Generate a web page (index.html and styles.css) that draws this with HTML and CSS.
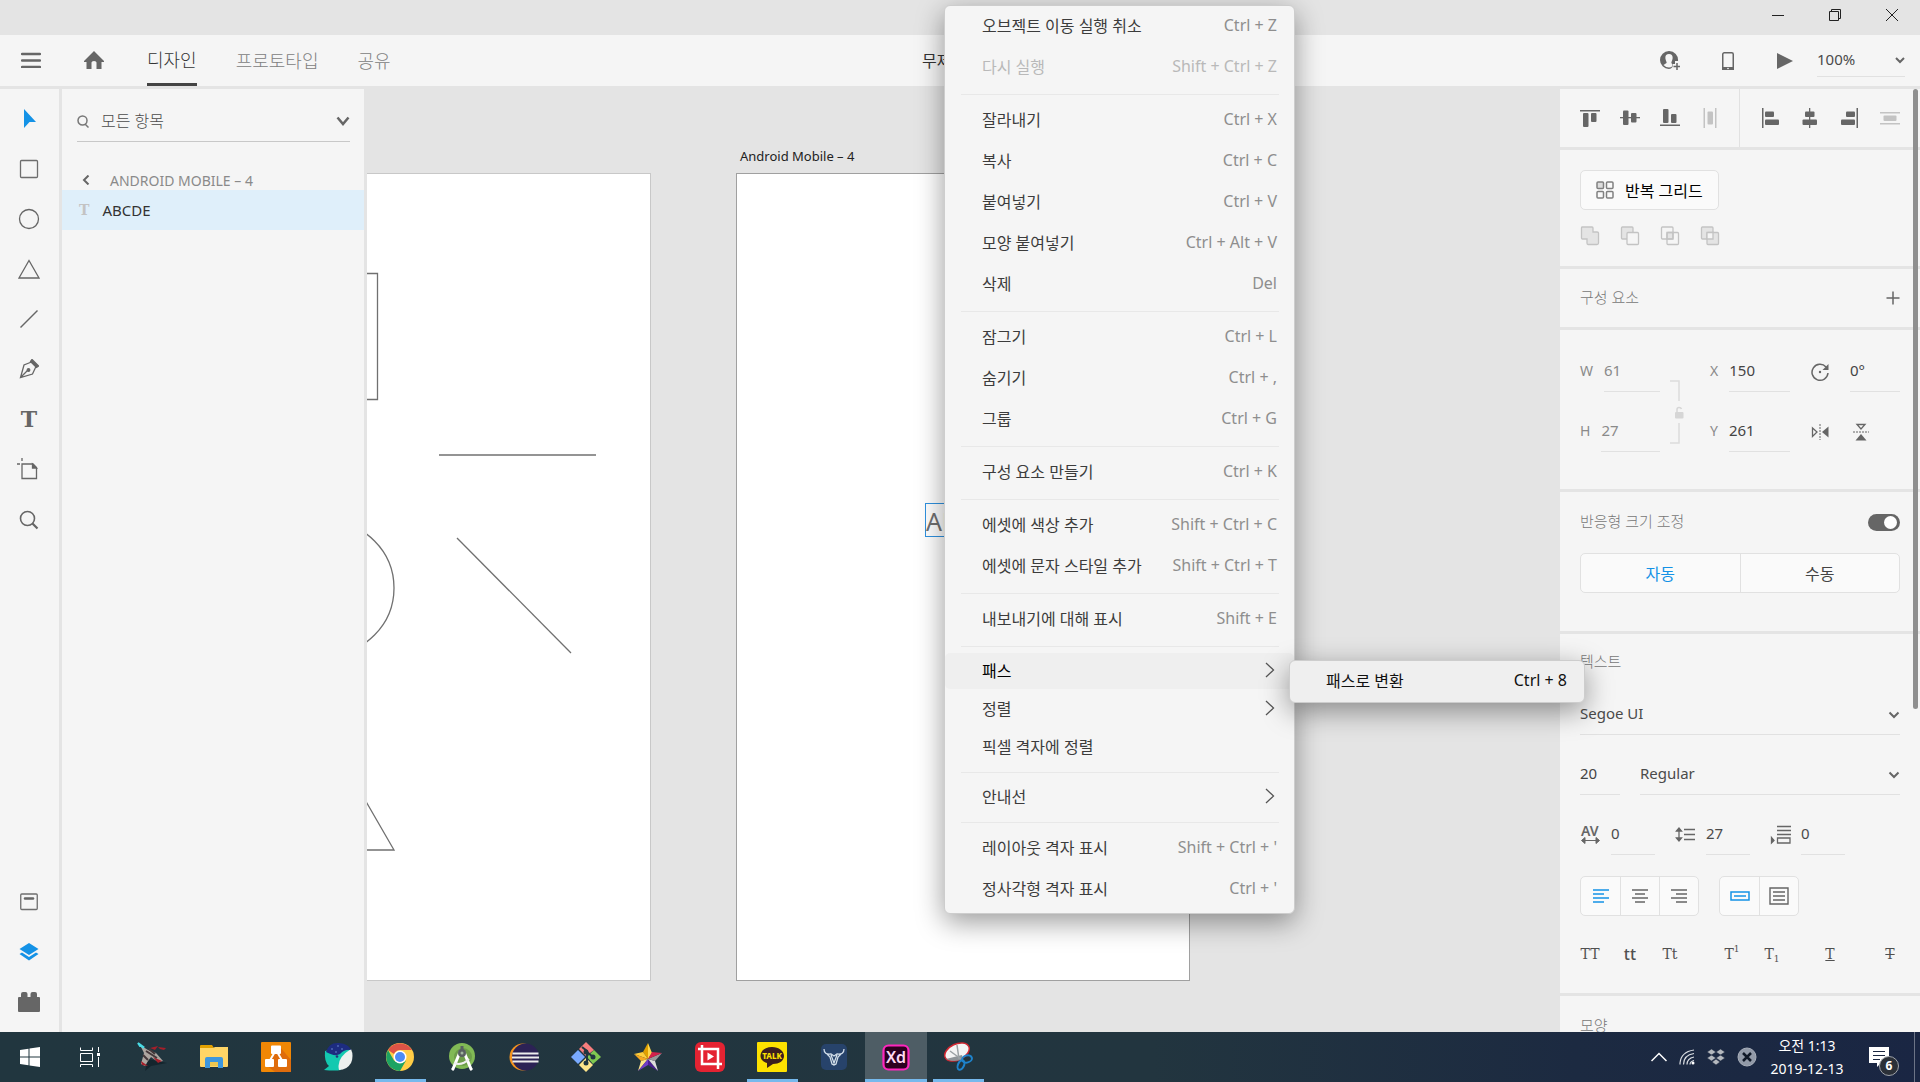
FILE: index.html
```html
<!DOCTYPE html>
<html lang="ko">

<head>
    <meta charset="UTF-8">
    <meta name="viewport" content="width=device-width, initial-scale=1.0">
    <title>무제 - Adobe XD</title>
    <link rel="stylesheet" href="styles.css">
</head>

<body>
    <div class="titlebar">
        <button class="window-btn" aria-label="최소화">
            <svg width="12" height="12"><path d="M0 6.5H12" stroke="#222" /></svg>
        </button>
        <button class="window-btn" aria-label="이전 크기로">
            <svg width="12" height="12" fill="none" stroke="#222"><path d="M.5 2.5h9v9h-9zM2.5 2.5v-2h9v9h-2" /></svg>
        </button>
        <button class="window-btn" aria-label="닫기">
            <svg width="12" height="12"><path d="M0 0L12 12M12 0L0 12" stroke="#222" /></svg>
        </button>
    </div>

    <header class="header">
        <nav class="header-nav">
            <button class="menu-btn" aria-label="메뉴">
                <svg width="20" height="16"><path d="M1 2H19M1 8.500H19M1 15H19" stroke="#666" stroke-width="2.500" stroke-linecap="round" /></svg>
            </button>
            <button class="home-btn" aria-label="홈">
                <svg width="20" height="18" fill="#666"><path d="M10 0L20 10V11H17.500V18H12.500V11.500Q12.500 10 10 10T7.500 11.500V18H2.500V11H0V10Z" /></svg>
            </button>
            <a class="tab tab-active" href="#">디자인</a>
            <a class="tab" href="#">프로토타입</a>
            <a class="tab" href="#">공유</a>
        </nav>
        <div class="doc-title">무제</div>
        <div class="header-tools">
            <button aria-label="공유 초대">
                <svg width="20" height="20"><path fill="#666" fill-rule="evenodd" d="M9 0A9 9 0 0 1 18 10H15V13H12.500V16Q11 18 9 18A9 9 0 0 1 9 0ZM9 3C6 3 5 5 5.500 8C6 10.500 7 11 6.500 12L3.500 14Q6 16.500 9 16.500Q11 16.500 12 15.500V13L11.500 12C11 11 12 10.500 12.500 8C13 5 12 3 9 3Z" /><path d="M17 12V19M13.500 15.500H20.500" stroke="#666" stroke-width="1.500" /></svg>
            </button>
            <button aria-label="장치 미리보기">
                <svg width="14" height="20"><rect x="1.750" y="1.750" width="10.500" height="16.500" rx="1.500" fill="none" stroke="#666" stroke-width="1.500" /><path d="M1 16H13V19H1Z" fill="#666" /><circle cx="7" cy="17.500" r=".8" fill="#fff" /></svg>
            </button>
            <button aria-label="재생">
                <svg width="18" height="18"><path d="M1 1L17 9L1 17Z" fill="#666" /></svg>
            </button>
            <div class="select-box zoom-box">
                <select aria-label="확대/축소"><option>100%</option></select>
                <svg width="10" height="8"><path d="M1 2L5 6L9 2" fill="none" stroke="#666" stroke-width="2" /></svg>
            </div>
        </div>
    </header>

    <main class="workspace">
        <aside class="toolbar">
            <button aria-label="선택"><svg width="20" height="22"><path d="M5 1L17 14H10.500L5 20Z" fill="#1492e6" /></svg></button>
            <button aria-label="사각형"><svg width="20" height="20"><rect x="1.500" y="1.500" width="17" height="17" rx="1" fill="none" stroke="#6e6e6e" stroke-width="1.300" /></svg></button>
            <button aria-label="타원"><svg width="22" height="22"><circle cx="11" cy="11" r="9.500" fill="none" stroke="#666" stroke-width="1.300" /></svg></button>
            <button aria-label="다각형"><svg width="22" height="20"><path d="M11 1.500L21 19H1Z" fill="none" stroke="#666" stroke-width="1.300" /></svg></button>
            <button aria-label="선"><svg width="20" height="20"><path d="M1.500 18.500L18.500 1.500" stroke="#666" stroke-width="1.400" /></svg></button>
            <button aria-label="펜"><svg width="20" height="20" fill="none" stroke="#666" stroke-width="1.300"><path d="M12.500 3L5 6L1.500 18.500L13.500 15L17 7.500ZM1.500 18.500L9 11" /><path d="M13 0.500L19.500 7L17.500 8.500L11.500 2.500Z" fill="#666" /><circle cx="9.500" cy="11" r="1.300" fill="#666" /></svg></button>
            <button class="type-tool" aria-label="텍스트">T</button>
            <button aria-label="대지"><svg width="24" height="22" fill="none" stroke="#666" stroke-width="1.300"><path d="M5 6H16L19.500 9.500V20.500H5ZM5 0V3M0 6H3" /><path d="M15.500 6L19.500 10H15.500Z" fill="#666" /></svg></button>
            <button aria-label="확대/축소 도구"><svg width="20" height="22" fill="none" stroke="#666"><circle cx="8.500" cy="10.500" r="7" stroke-width="1.600" /><path d="M13.500 15.500L18.500 20.500" stroke-width="2.200" /></svg></button>
            <div class="toolbar-spacer"></div>
            <button aria-label="에셋"><svg width="18" height="18"><rect x=".75" y="1" width="16.500" height="15.500" rx="1" fill="none" stroke="#6e6e6e" stroke-width="1.300" /><path d="M5 5.500H13" stroke="#666" stroke-width="2.500" stroke-linecap="round" /></svg></button>
            <button aria-label="레이어"><svg width="20" height="20" fill="#1492e6"><path d="M10 1L19.500 7L10 13L.5 7ZM.5 12L3 10.500L10 15L17 10.500L19.500 12L10 18.500Z" /></svg></button>
            <button aria-label="플러그인"><svg width="22" height="20" fill="#666"><path d="M1 5H3V2Q3 0 5 0H7.500Q9.500 0 9.500 2V5H12.500V2Q12.500 0 14.500 0H17Q19 0 19 2V5H21Q22 5 22 6V19Q22 20 21 20H1Q0 20 0 19V6Q0 5 1 5Z" /></svg></button>
        </aside>

        <section class="layers">
            <div class="layer-search">
                <svg width="12" height="13" fill="none" stroke="#777" stroke-width="1.500"><circle cx="5.500" cy="5.500" r="4.500" /><path d="M8 9L11.500 12.500" /></svg>
                <input type="text" aria-label="레이어 필터" value="모든 항목">
                <button aria-label="필터 펼치기"><svg width="14" height="10"><path d="M1.500 1.500L7 8L12.500 1.500" fill="none" stroke="#666" stroke-width="2.500" /></svg></button>
            </div>
            <a class="layer-parent" href="#">
                <svg width="8" height="10"><path d="M6.500 .5L2 5L6.500 9.500" fill="none" stroke="#666" stroke-width="2" /></svg>
                <span>ANDROID MOBILE – 4</span>
            </a>
            <div class="layer-row">
                <span class="layer-type">T</span>
                <span>ABCDE</span>
            </div>
        </section>

        <section class="canvas">
            <div class="artboard artboard-prev"></div>
            <svg class="shapes" width="284" height="800" fill="none" stroke="#707070" stroke-width="1.300">
                <path d="M-90 184.500H10.500V310.500H-90Z" />
                <path d="M72 366H229" />
                <circle cx="-39.500" cy="499" r="66.500" />
                <path d="M90 449L204 564" />
                <path d="M-40 645L27 761H-107Z" />
            </svg>
            <div class="artboard-label">Android Mobile – 4</div>
            <div class="artboard artboard-current"></div>
            <div class="text-object">ABCDE</div>
        </section>

        <aside class="inspector">
            <div class="align-panel">
                <div class="align-group">
                    <button aria-label="위쪽 정렬"><svg width="20" height="20" fill="#666"><path d="M0 2H20V3.500H0Z" /><rect x="3" y="5" width="5.500" height="14" rx="1" /><rect x="11" y="5" width="5.500" height="9" rx="1" /></svg></button>
                    <button aria-label="가운데 정렬(세로)"><svg width="20" height="20" fill="#666"><path d="M0 9H20V10.300H0Z" /><rect x="3" y="2.500" width="5.500" height="14.500" rx="1" /><rect x="11" y="5" width="5.500" height="9.500" rx="1" /></svg></button>
                    <button aria-label="아래쪽 정렬"><svg width="20" height="20" fill="#666"><path d="M0 16.500H20V18H0Z" /><rect x="3" y="1" width="5.500" height="14" rx="1" /><rect x="11" y="6" width="5.500" height="9" rx="1" /></svg></button>
                    <button aria-label="가로 분포" disabled><svg width="20" height="20" fill="#c3c3c3"><path d="M3.500 0H5V20H3.500ZM15 0H16.500V20H15Z" /><rect x="7.500" y="3.500" width="5.500" height="13" rx="1" /></svg></button>
                </div>
                <div class="align-group">
                    <button aria-label="왼쪽 정렬"><svg width="20" height="20" fill="#666"><path d="M2 0H3.500V20H2Z" /><rect x="5" y="3.500" width="9" height="5.500" rx="1" /><rect x="5" y="11.500" width="14" height="5.500" rx="1" /></svg></button>
                    <button aria-label="가운데 정렬(가로)"><svg width="20" height="20" fill="#666"><path d="M9 0H10.300V20H9Z" /><rect x="5" y="3.500" width="9.500" height="5.500" rx="1" /><rect x="2.500" y="11.500" width="14.500" height="5.500" rx="1" /></svg></button>
                    <button aria-label="오른쪽 정렬"><svg width="20" height="20" fill="#666"><path d="M16.500 0H18V20H16.500Z" /><rect x="6" y="3.500" width="9" height="5.500" rx="1" /><rect x="1" y="11.500" width="14" height="5.500" rx="1" /></svg></button>
                    <button aria-label="세로 분포" disabled><svg width="20" height="20" fill="#c3c3c3"><path d="M0 4H20V5.500H0ZM0 15H20V16.500H0Z" /><rect x="3.500" y="7.500" width="13" height="5.500" rx="1" /></svg></button>
                </div>
            </div>

            <div class="panel panel-repeat">
                <button class="repeat-btn">
                    <svg width="18" height="18" fill="#fafafa" stroke="#808080" stroke-width="1.500"><rect x="1" y="1" width="6.500" height="6.500" rx="1" fill="#ddd" /><rect x="10.500" y="1" width="6.500" height="6.500" rx="1" /><rect x="1" y="10.500" width="6.500" height="6.500" rx="1" /><rect x="10.500" y="10.500" width="6.500" height="6.500" rx="1" /></svg>
                    반복 그리드
                </button>
                <div class="boolean-row">
                    <button aria-label="추가" disabled><svg width="20" height="20" fill="#e4e4e4" stroke="#c3c3c3" stroke-width="1.300"><path d="M2 1H12Q13 1 13 2V6H17Q18.500 6 18.500 7V17Q18.500 18.500 17 18.500H8Q7 18.500 7 17V13H2.500Q1.500 13 1.500 12V2Q1.500 1 2 1Z" /></svg></button>
                    <button aria-label="빼기" disabled><svg width="20" height="20" stroke="#c3c3c3" stroke-width="1.300"><rect x="1.500" y="1" width="11.500" height="12" rx="1" fill="#e4e4e4" /><rect x="7" y="6.500" width="11.500" height="12" rx="1" fill="#f5f5f5" /></svg></button>
                    <button aria-label="교차" disabled><svg width="20" height="20" fill="none" stroke="#c3c3c3" stroke-width="1.300"><path d="M7 6.500H13V13H7Z" fill="#e4e4e4" /><rect x="1.500" y="1" width="11.500" height="12" rx="1" /><rect x="7" y="6.500" width="11.500" height="12" rx="1" /></svg></button>
                    <button aria-label="겹치는 부분 제외" disabled><svg width="20" height="20" fill="#e4e4e4" stroke="#c3c3c3" stroke-width="1.300"><rect x="1.500" y="1" width="11.500" height="12" rx="1" /><rect x="7" y="6.500" width="11.500" height="12" rx="1" /><path d="M7 6.500H13V13H7Z" fill="#f5f5f5" /></svg></button>
                </div>
            </div>

            <div class="panel panel-component">
                <h2>구성 요소</h2>
                <button aria-label="구성 요소 만들기"><svg width="14" height="14"><path d="M7 .5V13.500M.5 7H13.500" stroke="#666" stroke-width="1.500" /></svg></button>
            </div>

            <div class="panel panel-transform">
                <label class="field muted">W<input type="text" value="61"></label>
                <div class="lock">
                    <svg width="14" height="64"><path d="M0 1H9V21M0 63H9V43" fill="none" stroke="#dcdcdc" stroke-width="1.500" /><rect x="5" y="32" width="8.500" height="6.500" rx="1" fill="#d6d6d6" /><path d="M7 32V29.500Q7 27.500 9 27.500Q11 27.500 11.500 29" fill="none" stroke="#d6d6d6" stroke-width="1.500" /></svg>
                </div>
                <label class="field">X<input type="text" value="150"></label>
                <label class="rotate-icon" for="rotation">
                    <svg width="20" height="20"><path d="M16 5A8 8 0 1 0 18 11" fill="none" stroke="#666" stroke-width="1.500" /><path d="M18.500 2V8H12.500Z" fill="#666" /><circle cx="10" cy="10" r="1.200" fill="#666" /></svg>
                </label>
                <div class="field"><input id="rotation" type="text" value="0°"></div>
                <label class="field muted">H<input type="text" value="27"></label>
                <label class="field">Y<input type="text" value="261"></label>
                <button aria-label="가로로 뒤집기"><svg width="18" height="16"><path d="M1.500 4L6 8L1.500 12.500Z" fill="none" stroke="#666" stroke-width="1.300" /><path d="M17.500 2.500V13.500L11 8Z" fill="#666" /><path d="M9 0V16" stroke="#666" stroke-dasharray="2 1" /></svg></button>
                <button class="flip-v" aria-label="세로로 뒤집기"><svg width="16" height="18"><path d="M4 1.500H12L8 6Z" fill="none" stroke="#666" stroke-width="1.300" /><path d="M2.500 17.500H13.500L8 11Z" fill="#666" /><path d="M0 9H16" stroke="#666" stroke-dasharray="2 1" /></svg></button>
            </div>

            <div class="panel panel-responsive">
                <div class="panel-head">
                    <h2>반응형 크기 조정</h2>
                    <input class="toggle" type="checkbox" aria-label="반응형 크기 조정" checked>
                </div>
                <div class="segmented">
                    <button class="selected">자동</button>
                    <button>수동</button>
                </div>
            </div>

            <div class="panel panel-text">
                <h2>텍스트</h2>
                <div class="select-box">
                    <select aria-label="글꼴"><option>Segoe UI</option></select>
                    <svg width="12" height="8"><path d="M1.500 1.500L6 6L10.500 1.500" fill="none" stroke="#666" stroke-width="2" /></svg>
                </div>
                <div class="font-row">
                    <div class="field"><input type="text" aria-label="글꼴 크기" value="20"></div>
                    <div class="select-box">
                        <select aria-label="글꼴 두께"><option>Regular</option></select>
                        <svg width="12" height="8"><path d="M1.500 1.500L6 6L10.500 1.500" fill="none" stroke="#666" stroke-width="2" /></svg>
                    </div>
                </div>
                <div class="spacing-row">
                    <label>
                        <svg width="21" height="20"><text class="av-text" x="1" y="11">AV</text><path d="M2 15.500H18M5 12.500L1.500 15.500L5 18.500ZM16 12.500L19.500 15.500L16 18.500Z" fill="#666" stroke="#666" /></svg>
                        <input type="text" aria-label="문자 간격" value="0">
                    </label>
                    <label>
                        <svg width="21" height="20" fill="#666" stroke="#666"><path d="M4 4V14M1.500 6L4 3L6.500 6ZM1.500 13L4 16L6.500 13ZM9 4.500H20M9 9.500H20M9 14.500H20" stroke-width="1.300" /></svg>
                        <input type="text" aria-label="행간" value="27">
                    </label>
                    <label>
                        <svg width="21" height="20" fill="none" stroke="#666" stroke-width="1.300"><path d="M7 1.500H21M7 5.500H21M7 9.500H21M7.500 13H20V18H7.500Z" /><path d="M1.500 12.500V18L4 15.500Z" fill="#666" /></svg>
                        <input type="text" aria-label="단락 간격" value="0">
                    </label>
                </div>
                <div class="button-row">
                    <div class="segmented segmented-icons">
                        <button class="selected" aria-label="왼쪽 맞춤"><svg width="18" height="16"><path d="M1 2H17M1 6H12M1 10H17M1 14H12" stroke="currentColor" stroke-width="1.400" /></svg></button>
                        <button aria-label="가운데 맞춤"><svg width="18" height="16"><path d="M1 2H17M4 6H14M1 10H17M4 14H14" stroke="currentColor" stroke-width="1.400" /></svg></button>
                        <button aria-label="오른쪽 맞춤"><svg width="18" height="16"><path d="M1 2H17M6 6H17M1 10H17M6 14H17" stroke="currentColor" stroke-width="1.400" /></svg></button>
                    </div>
                    <div class="segmented segmented-icons">
                        <button class="selected" aria-label="점 텍스트"><svg width="20" height="10"><path d="M1 1H19V9H1ZM4 5H16" fill="none" stroke="currentColor" stroke-width="1.500" /></svg></button>
                        <button aria-label="영역 텍스트"><svg width="20" height="18"><path d="M1 1H19V17H1ZM4 5H16M4 9H16M4 13H16" fill="none" stroke="currentColor" stroke-width="1.400" /></svg></button>
                    </div>
                </div>
                <div class="case-row">
                    <button>TT</button>
                    <button class="case-lower">tt</button>
                    <button>Tt</button>
                    <button class="case-script">T<sup>1</sup></button>
                    <button class="case-script">T<sub>1</sub></button>
                    <button class="case-under">T</button>
                    <button class="case-strike">T</button>
                </div>
            </div>

            <div class="panel panel-look">
                <h2>모양</h2>
            </div>
            <div class="scrollbar"></div>
        </aside>
    </main>

    <footer class="taskbar">
        <button class="task" aria-label="시작"><svg width="20" height="20" fill="#fff"><path d="M0 3L8.500 1.800V9.500H0ZM9.500 1.600L20 0V9.500H9.500ZM0 10.500H8.500V18.300L0 17ZM9.500 10.500H20V20L9.500 18.500Z" /></svg></button>
        <button class="task" aria-label="작업 보기"><svg width="21" height="20" fill="none" stroke="#fff"><path d="M.5 .5V3.500H12.500V.5M.5 6.500H12.500V14.500H.5ZM.5 20V17.500H12.500V20M18.500 0V5M18.500 10V20" /><path d="M17 6H20V9H17Z" fill="#fff" stroke="none" /></svg></button>
        <button class="task" aria-label="게임"><svg width="32" height="30"><path d="M12 17L31 21L15 24L9 29Z" fill="#14252d" /><path d="M4 3L12 8L20 11L27 19L22 20L15 15L12 19L9 24L5 22L8 11Z" fill="#aca5a0" /><path d="M2 1L6 4L4 4ZM5 4L8 6" stroke="#49dbe4" stroke-width="2" /><path d="M14 6L22 4L19 8ZM22 5L30 6L28 8L24 7ZM17 15L26 19L22 21ZM5 19L12 24L6 23Z" fill="#a51f2a" /><path d="M10 9L21 16M13 7L19 12M7 13L12 18" stroke="#44383b" stroke-width="2" /></svg></button>
        <button class="task" aria-label="파일 탐색기"><svg width="28" height="24"><path d="M0 1Q0 0 1 0H12L14 3H0Z" fill="#e2a000" /><path d="M0 3H13L15 2H28V21Q28 22 27 22H1Q0 22 0 21Z" fill="#ffd566" /><path d="M5 14Q5 12 7 12H21Q23 12 23 14V23H18V17H10V23H5Z" fill="#3d97de" /><path d="M10 17H18V21H10Z" fill="#eec750" /></svg></button>
        <button class="task" aria-label="다이어그램"><svg width="30" height="30"><rect width="30" height="30" rx="1" fill="#f08705" /><path d="M19 5L30 18V30H14L4 22Z" fill="#df6c0c" /><path d="M15 8L8 20M15 8L22 20" stroke="#fff" stroke-width="2" /><path d="M11 4.500H19V11H11ZM5 18H12V24H5ZM18 18H25V24H18Z" fill="#fff" stroke="#fff" stroke-width="2" stroke-linejoin="round" /></svg></button>
        <button class="task" aria-label="웨일"><svg width="30" height="30"><path d="M2 9Q1 20 6 24L1 28Q12 29 18 28Q17 17 28 8L15 6Z" fill="#13c9b0" /><path d="M28 7Q31 14 28 21Q24 28 16 28Q13 16 28 7Z" fill="#edf1ef" /><path d="M3 10Q6 0 16 1Q26 2 28 8Q22 7 17 12Q12 15 3 10Z" fill="#1d2c80" /><path d="M8 7H10M14 4H16M18 7H20M12 10H14" stroke="#6681ca" /><circle cx="14" cy="14.500" r="1.300" fill="#28307c" /></svg></button>
        <button class="task task-open" aria-label="Chrome"><svg width="28" height="28"><circle cx="14" cy="14" r="14" fill="#ffcd46" /><path d="M2 7A14 14 0 0 1 26 7H14A7 7 0 0 0 8 11Z" fill="#de5346" /><path d="M2 7A14 14 0 0 0 14 28L20 17.500Q14 22 8 17.500Z" fill="#1da362" /><circle cx="14" cy="14" r="6.500" fill="#fff" /><circle cx="14" cy="14" r="5" fill="#4c8bf5" /></svg></button>
        <button class="task" aria-label="Android Studio"><svg width="28" height="30"><circle cx="14" cy="14" r="13" fill="#81b955" /><circle cx="15" cy="15" r="9" fill="#6d9d4a" /><path d="M12 10L5 27L4 28M16 10L23 27L24 28" fill="none" stroke="#fff" stroke-width="3" /><path d="M6 21Q14 24 21 17" fill="none" stroke="#eee" stroke-width="2" /><circle cx="14" cy="11" r="4" fill="#596161" /><path d="M14 4V9" stroke="#596161" stroke-width="3" /><circle cx="14" cy="11" r="1.500" fill="#a0b59e" /></svg></button>
        <button class="task" aria-label="Eclipse"><svg width="30" height="28"><circle cx="14" cy="14" r="13.500" fill="#f7941e" /><circle cx="16.500" cy="14" r="13.500" fill="#2c2255" /><path d="M3.500 10.500H29.500M3 14.500H30M3.500 18.500H29.500" stroke="#eee" stroke-width="2.200" /></svg></button>
        <button class="task" aria-label="Git Bash"><svg width="30" height="30"><path d="M15 0L23 8L15 14L8 7Z" fill="#f77d7d" /><path d="M7 8L14 15L7 22L0 15Z" fill="#79aaff" /><path d="M23 8L30 15L22 22L16 15Z" fill="#80c951" /><path d="M15 16L22 23L15 30L8 23Z" fill="#ffe68b" /><path d="M11 5L16 9V22M16 10L22 15" fill="none" stroke="#213740" stroke-width="2" /><circle cx="15" cy="10" r="2.500" fill="#213740" /><circle cx="15" cy="21" r="2.500" fill="#213740" /><circle cx="22" cy="15" r="2.500" fill="#213740" /></svg></button>
        <button class="task" aria-label="StarUML"><svg width="30" height="30"><path d="M15 1V17L10 10Z" fill="#e0a000" /><path d="M15 1L19 11L15 17Z" fill="#ffd84d" /><path d="M1 12L10 10L15 17Z" fill="#ffcf3c" /><path d="M1 12L8 19L15 17Z" fill="#f6a821" /><path d="M8 19L5 29L15 17Z" fill="#fce48a" /><path d="M5 29L15 23V17Z" fill="#6f3cc4" /><path d="M15 17V23L25 29Z" fill="#4b1f91" /><path d="M15 17L22 19L25 29Z" fill="#ddd" /><path d="M15 17L29 11L22 19Z" fill="#999" /><path d="M15 17L19 10L29 11Z" fill="#d3214b" /></svg></button>
        <button class="task" aria-label="반디컷"><svg width="30" height="30"><rect width="30" height="30" rx="6" fill="#e42332" /><path d="M7 3V22H27M3 7H23V27" fill="none" stroke="#fff" stroke-width="2.500" /><path d="M12.500 10.500L19 14.500L12.500 18.500Z" fill="#fff" /></svg></button>
        <button class="task task-open" aria-label="카카오톡"><svg width="30" height="30"><rect width="30" height="30" rx="1" fill="#fde100" /><path d="M15 5C22 5 27 9 27 14C27 19 22 22 16 22L10 26V21C6 20 3.500 17 3.500 14C3.500 9 8 5 15 5Z" fill="#3c1f1e" /><text class="talk-text" x="15" y="17">TALK</text></svg></button>
        <button class="task" aria-label="불 아이콘 앱"><svg width="28" height="28"><rect x="1" y="1" width="26" height="26" rx="5" fill="#27436b" /><path d="M4 6Q4 12 11 11L14 13L17 11Q24 12 24 6M7 11L10 14L12 21L14 22L16 21L18 14L21 11M11 12L14 20L17 12" fill="none" stroke="#d3dfea" stroke-width="1.300" /></svg></button>
        <button class="task task-open task-active" aria-label="Adobe XD"><svg width="28" height="28"><rect x="1.500" y="2.500" width="25" height="24" rx="5" fill="#2e001f" stroke="#ff26be" stroke-width="2.200" /><text class="xd-text" x="14" y="20">Xd</text></svg></button>
        <button class="task task-open" aria-label="캡처 도구"><svg width="30" height="30"><ellipse cx="14" cy="10" rx="13" ry="8" fill="#f4f4f4" stroke="#cf2731" stroke-width="1.500" transform="rotate(-25 14 10)" /><path d="M3 17L19 13L20 17Q11 21 3 17Z" fill="#8e9498" /><path d="M7 9L18 17M14 3L16 17" stroke="#9ba1a4" stroke-width="1.500" /><ellipse cx="24" cy="17" rx="5" ry="3.500" fill="none" stroke="#1e83cc" stroke-width="2" transform="rotate(-15 24 17)" /><ellipse cx="18" cy="23" rx="3" ry="5" fill="none" stroke="#1e83cc" stroke-width="2" transform="rotate(25 18 23)" /></svg></button>
        <div class="tray">
            <svg width="16" height="10"><path d="M.5 9L8 1.500L15.500 9" fill="none" stroke="#fff" stroke-width="1.500" /></svg>
            <svg width="16" height="16" fill="none" stroke="#d9dde2"><path d="M1 15.500V14Q2 3 15 1M4.500 15.500Q4.500 6 15 4.500M8 15.500Q8 9.500 15 8M11 15.500Q11 12.500 15 11.500" stroke-width="1.200" /><circle cx="14" cy="14" r="1.500" fill="#fff" stroke="none" /></svg>
            <svg width="18" height="16" fill="#b4b8be"><path d="M4.500 0L9 3L4.500 6L0 3ZM13.500 0L18 3L13.500 6L9 3ZM4.500 6L9 9L4.500 12L0 9ZM13.500 6L18 9L13.500 12L9 9ZM9 10L13 13L9 16L5 13Z" stroke="#1c2941" stroke-width=".6" /></svg>
            <svg width="20" height="20"><circle cx="10" cy="10" r="9" fill="#929aa8" stroke="#a9afba" stroke-width="1" /><path d="M6 6L14 14M14 6L6 14" stroke="#101827" stroke-width="2.500" /></svg>
            <div class="clock"><span>오전 1:13</span><span>2019-12-13</span></div>
            <button class="notifications" aria-label="알림 센터">
                <svg width="20" height="20"><path d="M0 0H20V16H12L8 20V16H0Z" fill="#fff" /><path d="M4 4.500H16M4 8.500H16M4 12.500H11" stroke="#1b2741" stroke-width="1.200" /></svg>
                <span class="badge">6</span>
            </button>
            <button class="show-desktop" aria-label="바탕 화면 보기"></button>
        </div>
    </footer>

    <div class="context-menu" role="menu">
        <button>오브젝트 이동 실행 취소<kbd>Ctrl + Z</kbd></button>
        <button disabled>다시 실행<kbd>Shift + Ctrl + Z</kbd></button>
        <hr>
        <button>잘라내기<kbd>Ctrl + X</kbd></button>
        <button>복사<kbd>Ctrl + C</kbd></button>
        <button>붙여넣기<kbd>Ctrl + V</kbd></button>
        <button>모양 붙여넣기<kbd>Ctrl + Alt + V</kbd></button>
        <button>삭제<kbd>Del</kbd></button>
        <hr>
        <button>잠그기<kbd>Ctrl + L</kbd></button>
        <button>숨기기<kbd>Ctrl + ,</kbd></button>
        <button>그룹<kbd>Ctrl + G</kbd></button>
        <hr>
        <button>구성 요소 만들기<kbd>Ctrl + K</kbd></button>
        <hr>
        <button>에셋에 색상 추가<kbd>Shift + Ctrl + C</kbd></button>
        <button>에셋에 문자 스타일 추가<kbd>Shift + Ctrl + T</kbd></button>
        <hr>
        <button>내보내기에 대해 표시<kbd>Shift + E</kbd></button>
        <hr>
        <button class="compact current">패스<svg width="10" height="16"><path d="M1 1L8.500 8L1 15" /></svg></button>
        <button class="compact">정렬<svg width="10" height="16"><path d="M1 1L8.500 8L1 15" /></svg></button>
        <button class="compact">픽셀 격자에 정렬</button>
        <hr>
        <button class="compact">안내선<svg width="10" height="16"><path d="M1 1L8.500 8L1 15" /></svg></button>
        <hr>
        <button>레이아웃 격자 표시<kbd>Shift + Ctrl + '</kbd></button>
        <button>정사각형 격자 표시<kbd>Ctrl + '</kbd></button>
    </div>

    <div class="context-menu submenu" role="menu">
        <button>패스로 변환<kbd>Ctrl + 8</kbd></button>
    </div>
</body>

</html>
```

FILE: styles.css
```css
* {
    box-sizing: border-box;
}

body {
    margin: 0;
    height: 100vh;
    display: flex;
    flex-direction: column;
    position: relative;
    overflow: hidden;
    font-family: "Noto Sans", "Noto Sans CJK KR", sans-serif;
    font-size: 16px;
    color: #4b4b4b;
    background-color: #e4e4e4;
}

button,
input,
select,
kbd {
    font: inherit;
    color: inherit;
    border: none;
    background: none;
    padding: 0;
    margin: 0;
    outline: none;
}

select {
    appearance: none;
    flex: 1;
    min-width: 0;
    padding-bottom: 3px;
}

input {
    min-width: 0;
}

button {
    display: flex;
    align-items: center;
    justify-content: center;
}

a {
    color: inherit;
    text-decoration: none;
}

svg {
    display: block;
    flex: none;
}

h2 {
    margin: 0;
    padding-bottom: 2px;
    font-size: 15px;
    line-height: 18px;
    font-weight: 300;
    color: #777;
}

/* window bar */
.titlebar {
    height: 35px;
    display: flex;
    justify-content: flex-end;
    flex: none;
}

.window-btn {
    width: 57px;
    height: 30px;
}

/* header */
.header {
    height: 51px;
    flex: none;
    display: grid;
    grid-template-columns: 1fr 76px 1fr;
    background-color: #f5f5f5;
}

.header-nav {
    display: flex;
    padding-left: 21px;
}

.menu-btn {
    margin-right: 43px;
    padding-bottom: 2px;
}

.home-btn {
    margin-right: 43px;
    padding-bottom: 2px;
}

.tab {
    display: flex;
    align-items: center;
    height: 51px;
    padding-bottom: 2px;
    margin-right: 39px;
    font-size: 18px;
    font-weight: 300;
    color: #808080;
}

.tab-active {
    color: #333;
    padding-bottom: 0;
    border-bottom: 3px solid #444;
}

.doc-title {
    align-self: center;
    padding-bottom: 2px;
    color: #333;
}

.header-tools {
    display: flex;
    align-items: center;
    justify-content: flex-end;
    padding-right: 15px;
}

.header-tools > button {
    margin-right: 41px;
}

.header-tools > button:nth-child(3) {
    margin-right: 23px;
}

.select-box {
    display: flex;
    align-items: center;
    height: 40px;
    font-size: 15px;
    border-bottom: 1px solid #e1e1e1;
}

.zoom-box {
    width: 88px;
    height: 32px;
}

/* workspace */
.workspace {
    flex: 1;
    min-height: 0;
    display: flex;
    gap: 3px;
    padding-top: 3px;
}

.toolbar {
    width: 59px;
    padding: 5px 12px 5px 0;
    display: flex;
    flex-direction: column;
    background-color: #f5f5f5;
}

.toolbar button {
    height: 50px;
    padding-left: 11px;
}

.toolbar-spacer {
    flex: 1;
}

.type-tool {
    font-family: "DejaVu Serif", serif;
    font-size: 22px;
    font-weight: bold;
    color: #666;
}

.layers {
    width: 302px;
    background-color: #f5f5f5;
}

.layer-search {
    display: flex;
    align-items: center;
    height: 41px;
    margin: 12px 14px 0 15px;
    border-bottom: 1px solid #c8c8c8;
}

.layer-search input {
    flex: 1;
    margin-left: 12px;
    padding-bottom: 2px;
    font-weight: 300;
}

.layer-parent {
    display: flex;
    align-items: center;
    gap: 20px;
    height: 20px;
    margin: 28px 0 0 20px;
    font-size: 14px;
    color: #8a8a8a;
}

.layer-row {
    display: flex;
    align-items: center;
    gap: 13px;
    height: 40px;
    padding-left: 17px;
    font-size: 15px;
    color: #333;
    background-color: #dfeffa;
}

.layer-type {
    font-family: "DejaVu Serif", serif;
    font-size: 14px;
    font-weight: bold;
    color: #c3c3c3;
}

/* canvas */
.canvas {
    flex: 1;
    position: relative;
    overflow: hidden;
}

.artboard {
    position: absolute;
    top: 84px;
    height: 808px;
    width: 454px;
    background-color: #fff;
}

.artboard-prev {
    left: -170px;
    border: 1px solid #c8c8c8;
}

.artboard-current {
    left: 369px;
    border: 1px solid #a0a0a0;
}

.shapes {
    position: absolute;
    left: 0;
    top: 0;
}

.artboard-label {
    position: absolute;
    left: 373px;
    top: 57px;
    font-size: 13px;
    line-height: 20px;
    color: #222;
}

.text-object {
    position: absolute;
    left: 558px;
    top: 414px;
    height: 34px;
    line-height: 34px;
    font-size: 25px;
    color: #707070;
    border: 1px solid #2f92e0;
}

/* inspector */
.inspector {
    width: 360px;
    margin-left: -3px;
    position: relative;
    overflow: hidden;
    display: flex;
    flex-direction: column;
    gap: 3px;
}

.panel,
.align-panel {
    flex: none;
    background-color: #f5f5f5;
}

.panel {
    padding: 0 20px;
}

.align-panel {
    height: 58px;
    display: grid;
    grid-template-columns: 1fr 1fr;
}

.align-group {
    display: flex;
    align-items: center;
    justify-content: center;
    gap: 20px;
}

.align-group:first-child {
    border-right: 1px solid #e1e1e1;
}

.panel-repeat {
    height: 116px;
    padding-top: 20px;
}

.repeat-btn {
    gap: 11px;
    height: 40px;
    padding: 0 15px;
    color: #000;
    background-color: #fafafa;
    border: 1px solid #e1e1e1;
    border-radius: 5px;
}

.boolean-row {
    display: flex;
    gap: 20px;
    margin-top: 16px;
}

.panel-component {
    height: 58px;
    display: flex;
    align-items: center;
    justify-content: space-between;
}

.panel-transform {
    display: grid;
    grid-template-columns: 80px 50px 80px 60px 50px;
    row-gap: 20px;
    padding: 22px 20px 37px;
}

.field {
    display: flex;
    align-items: baseline;
    height: 40px;
    gap: 11px;
    font-size: 14px;
    color: #8a8a8a;
}

.field input {
    flex: 1;
    width: 0;
    height: 40px;
    padding-bottom: 4px;
    font-size: 15px;
    color: #444;
    border-bottom: 1px solid #e1e1e1;
}

.muted input {
    color: #8a8a8a;
}

.lock {
    grid-row: 1 / 3;
    grid-column: 2;
    display: flex;
    align-items: center;
    padding-left: 10px;
    padding-top: 20px;
}

.rotate-icon {
    display: flex;
    align-items: center;
    justify-content: center;
}

.flip-v {
    justify-content: flex-start;
    padding-left: 3px;
}

.panel-responsive {
    height: 139px;
    padding-top: 20px;
}

.panel-head {
    display: flex;
    align-items: center;
    justify-content: space-between;
}

.toggle {
    appearance: none;
    width: 32px;
    height: 17px;
    padding: 2px 3px;
    border-radius: 9px;
    background-color: #666;
    display: flex;
    justify-content: flex-end;
}

.toggle::before {
    content: "";
    width: 13px;
    height: 13px;
    border-radius: 50%;
    background-color: #fff;
}

.segmented {
    display: flex;
    height: 40px;
    background-color: #fafafa;
    border: 1px solid #e1e1e1;
    border-radius: 5px;
}

.panel-responsive .segmented {
    margin-top: 21px;
}

.segmented button {
    flex: 1;
    color: #444;
}

.segmented button + button {
    border-left: 1px solid #e1e1e1;
}

.segmented .selected {
    color: #1492e6;
}

.panel-text {
    height: 359px;
    padding-top: 18px;
}

.panel-text > .select-box {
    margin-top: 23px;
}

.font-row {
    display: grid;
    grid-template-columns: 40px 1fr;
    gap: 20px;
    margin-top: 20px;
}

.spacing-row {
    display: flex;
    gap: 20px;
    margin-top: 20px;
}

.spacing-row label {
    display: flex;
    align-items: center;
    gap: 10px;
}

.spacing-row input {
    width: 44px;
    height: 40px;
    padding-bottom: 4px;
    font-size: 15px;
    border-bottom: 1px solid #e1e1e1;
}

.av-text {
    font-size: 14px;
    font-weight: 600;
    fill: #666;
}

.button-row {
    display: flex;
    gap: 20px;
    margin-top: 21px;
}

.segmented-icons button {
    width: 39px;
    flex: none;
}

.segmented-icons button:not(.selected) {
    color: #666;
}

.case-row {
    display: grid;
    grid-template-columns: 40px 40px 60px 40px 60px 60px 20px;
    margin-top: 28px;
    font-family: "DejaVu Serif", serif;
    font-size: 14px;
    line-height: 20px;
    color: #505050;
}

.case-row button {
    width: 20px;
}

.case-row .case-script {
    width: 24px;
}

.case-lower {
    font-family: "Noto Sans", sans-serif;
    font-size: 16px;
    font-weight: 500;
}

.case-row sup,
.case-row sub {
    font-size: 9px;
    line-height: 10px;
}

.case-row sup {
    align-self: flex-start;
}

.case-row sub {
    align-self: flex-end;
}

.case-under {
    text-decoration: underline;
}

.case-strike {
    text-decoration: line-through;
}

.panel-look {
    height: 60px;
    padding-top: 20px;
}

.scrollbar {
    position: absolute;
    top: 0;
    right: 2px;
    width: 5px;
    height: 620px;
    border-radius: 3px;
    background-color: #8f8f8f;
}

/* taskbar */
.taskbar {
    height: 50px;
    flex: none;
    display: flex;
    color: #fff;
    background: linear-gradient(to right, #21363f, #22353f 60%, #1c2a41 82%, #1a2643);
}

.task {
    width: 62px;
    position: relative;
}

.task:nth-child(1) {
    width: 59px;
}

.task-open::after {
    content: "";
    position: absolute;
    left: 6px;
    right: 5px;
    bottom: 0;
    height: 3px;
    background-color: #76b9ed;
}

.task-active {
    background-color: #4e5d65;
}

.task-active::after {
    left: 0;
    right: 0;
}

.talk-text {
    font-size: 8px;
    font-weight: 800;
    fill: #fde100;
    text-anchor: middle;
}

.xd-text {
    font-size: 16px;
    font-weight: 600;
    fill: #ffd9f2;
    text-anchor: middle;
}

.tray {
    margin-left: auto;
    display: flex;
    align-items: center;
    gap: 12px;
}

.clock {
    display: flex;
    flex-direction: column;
    align-items: center;
    width: 76px;
    font-size: 14px;
    line-height: 23px;
}

.notifications {
    position: relative;
    margin-left: 12px;
}

.badge {
    position: absolute;
    left: 10px;
    top: 9px;
    width: 20px;
    height: 20px;
    font-size: 12px;
    font-weight: bold;
    line-height: 18px;
    border: 1px solid #a0a4aa;
    border-radius: 50%;
    background-color: #2b3038;
}

.show-desktop {
    align-self: stretch;
    width: 6px;
    margin-left: 13px;
    border-left: 1px solid #6c7486;
}

/* context menu */
.context-menu {
    position: absolute;
    left: 944px;
    top: 5px;
    width: 351px;
    display: flex;
    flex-direction: column;
    padding-bottom: 3px;
    background-color: #f5f5f5;
    border: 1px solid #cdcdcd;
    border-radius: 6px;
    box-shadow: 0 8px 28px rgba(0, 0, 0, 0.4);
}

.context-menu button {
    height: 41px;
    padding: 0 17px 3px 37px;
    justify-content: space-between;
    color: #3c3c3c;
}

.context-menu kbd {
    color: #8e8e8e;
}

.context-menu button:disabled,
.context-menu button:disabled kbd {
    color: #b9b9b9;
}

.context-menu .compact {
    height: 36px;
    margin: 1px 0;
    border-radius: 5px;
}

.context-menu .current {
    color: #000;
    background-color: #efefef;
}

.context-menu svg {
    margin-right: 2px;
    fill: none;
    stroke: #555;
    stroke-width: 1.3;
}

.context-menu hr {
    flex: none;
    height: 1px;
    margin: 6px 15px 5px 16px;
    border: none;
    background-color: #e8e8e8;
}

.submenu {
    left: 1289px;
    top: 660px;
    width: 296px;
    padding: 0;
    background-color: #efefef;
}

.submenu button,
.submenu kbd {
    color: #111;
}

.context-menu.submenu button {
    padding-left: 36px;
}
```
